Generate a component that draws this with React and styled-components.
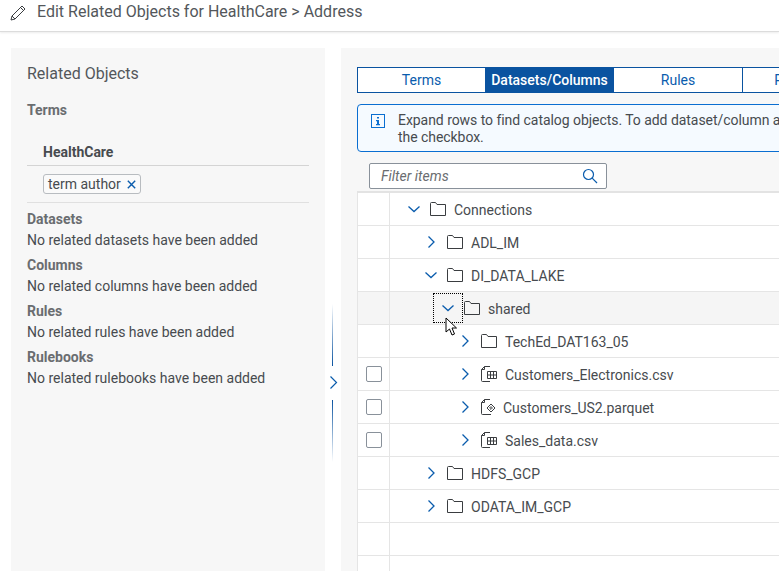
import React from "react";
import styled, { createGlobalStyle } from "styled-components";

const Global = createGlobalStyle`
  html, body { margin: 0; padding: 0; background: #fff; }
  * { box-sizing: border-box; }
  body { font-family: Roboto, "Noto Sans", Arial, sans-serif; color: #474b4f; }
`;

const Page = styled.div`
  width: 779px; height: 571px; overflow: hidden; display: flex; flex-direction: column; background: #fff; position: relative;
`;
const Header = styled.header`
  height: 32px; flex: none; display: flex; align-items: flex-start; padding: 3px 0 0 10px; gap: 11px;
  border-bottom: 1px solid #dcdcdc; box-shadow: 0 1px 2px rgba(0,0,0,.08);
`;
const Title = styled.h1`
  margin: 0; font-size: 16px; font-weight: 400; line-height: 18px; color: #53575b; white-space: nowrap;
`;
const Body = styled.div`
  flex: 1; display: flex; padding: 16px 0 0 11px; min-height: 0;
`;
const LeftPanel = styled.aside`
  width: 314px; flex: none; background: #f7f7f7; padding: 16px 16px 0;
`;
const PanelTitle = styled.h2`
  margin: 0 0 17px; font-size: 16px; font-weight: 400; line-height: 20px; color: #53575b;
`;
const SectionTitle = styled.h3`
  margin: 0; font-size: 14px; font-weight: 700; line-height: 18px; color: #6a6d70;
`;
const TermHead = styled.div`
  margin-top: 24px; height: 23px; padding-left: 16px; font-size: 14px; font-weight: 700; line-height: 18px; color: #474b4f; border-bottom: 1px solid #d4d4d4;
`;
const TermCell = styled.div`
  height: 37px; padding: 8px 0 0 16px; border-bottom: 1px solid #e0e0e0; margin-bottom: 7px;
`;
const Token = styled.span`
  display: inline-flex; align-items: center; height: 20px; padding: 0 4px; gap: 6px; border: 1px solid #b8bcc0; border-radius: 3px; background: #fafafa; font-size: 14px; color: #474b4f;
`;
const Empty = styled.p`
  margin: 2px 0 5px; font-size: 14px; line-height: 21px; color: #474b4f; height: 21px;
`;
const Sash = styled.div`
  width: 16px; flex: none; position: relative;
`;
const SashLine = styled.i`
  position: absolute; left: 7px; width: 1px; display: block;
  top: ${p => p.$top}px; height: ${p => p.$h}px;
  background: linear-gradient(${p => p.$dir}, rgba(10,83,160,0), #0a53a0);
`;
const RightPanel = styled.main`
  flex: 1; background: #f7f7f7; padding: 19px 0 0 16px; min-width: 0; overflow: hidden;
`;
const Tabs = styled.div`
  display: flex; width: 520px; height: 26px; border: 1px solid #0a53a0; background: #fff;
`;
const Tab = styled.div`
  width: ${p => p.$w}px; flex: none; display: flex; align-items: center; justify-content: center; font-size: 14px;
  color: ${p => p.$active ? "#fff" : "#0a5cad"}; background: ${p => p.$active ? "#0a53a0" : "transparent"};
  border-right: ${p => p.$sep ? "1px solid #0a53a0" : "none"};
  font-weight: ${p => p.$active ? 500 : 400};
`;
const Strip = styled.div`
  margin-top: 11px; width: 500px; height: 48px; border: 1px solid #0a6ed1; border-radius: 4px; background: #f5faff; display: flex; padding: 7px 0 0 13px; gap: 13px;
`;
const StripText = styled.div`
  font-size: 14px; line-height: 17px; color: #474b4f; white-space: nowrap; letter-spacing: -0.05px;
`;
const FilterBar = styled.div`
  margin: 11px 0 2px 12px; width: 238px; height: 26px; border: 1px solid #89919a; border-radius: 2px; background: #fff; display: flex; align-items: center; justify-content: space-between; padding: 0 8px 0 11px; font-size: 14px; font-style: italic; color: #6a6d70;
`;
const Table = styled.div`
  border-top: 2px solid #e3e3e3; background: #fff; width: 500px; height: 400px;
`;
const Row = styled.div`
  height: 33px; display: flex; border-bottom: 1px solid #e5e5e5; background: ${p => p.$hover ? "#f5f5f5" : "#fff"};
`;
const SelCell = styled.div`
  width: 33px; flex: none; border-right: 1px solid #e5e5e5; border-left: 1px solid #e5e5e5; display: flex; align-items: center; justify-content: center;
`;
const Check = styled.span`
  width: 16px; height: 16px; border: 1px solid #89919a; border-radius: 2px; background: #fff; display: block;
`;
const TreeCell = styled.div`
  flex: 1; display: flex; align-items: center; position: relative; padding-left: ${p => 17 * p.$level + 17}px; font-size: 14px; color: #474b4f;
`;
const Toggle = styled.span`
  width: 14px; flex: none; display: flex; justify-content: center; position: relative; margin-right: 9px;
`;
const Focus = styled.span`
  position: absolute; left: -8px; top: -8px; width: 30px; height: 30px; border: 1px dotted #000;
`;
const IconBox = styled.span`
  width: 16px; height: 16px; flex: none; display: block;
`;
const Label = styled.span`
  margin-left: ${p => p.$gap || 8}px; white-space: nowrap; line-height: 18px; position: relative; top: 1px;
`;
const Cursor = styled.svg`
  position: absolute; left: 445px; top: 317px;
`;

const Chevron = ({ open }) => (
  <svg width="14" height="14" viewBox="0 0 14 14" fill="none" stroke="#0a5cad" strokeWidth="1.3">
    {open ? <path d="M1.5 4.5 7 9.5l5.5-5" /> : <path d="M4.5 1.5 10 7l-5.5 5.5" />}
  </svg>
);
const Folder = () => (
  <svg width="16" height="16" viewBox="0 0 16 16" fill="none" stroke="#3a3d40" strokeWidth="1"><path d="M.5 14.5v-12a1 1 0 0 1 1-1h4l1.5 2h8.5v11z" /></svg>
);
const TableFile = () => (
  <svg width="16" height="16" viewBox="0 0 16 16" fill="none" stroke="#3a3d40" strokeWidth="1">
    <path d="M9 .5H3.5L.5 3.5v11a1 1 0 0 0 1 1H9" />
    <path d="M3.5.5v3h-3" />
    <path d="M6.5 5.5h9v7h-9zM6.5 9h9M9.5 5.5v7M12.5 5.5v7" />
  </svg>
);
const DiamondFile = () => (
  <svg width="16" height="16" viewBox="0 0 16 16" fill="none" stroke="#3a3d40" strokeWidth="1">
    <path d="M9 .5H3.5L.5 3.5v11a1 1 0 0 0 1 1H10" />
    <path d="M3.5.5v3h-3" />
    <path d="M10 5 14 9l-4 4-4-4zM10 7.6 11.4 9 10 10.4 8.6 9z" />
  </svg>
);

const rows = [
  { level: 2, open: true, icon: "folder", text: "Connections" },
  { level: 3, icon: "folder", text: "ADL_IM" },
  { level: 3, open: true, icon: "folder", text: "DI_DATA_LAKE" },
  { level: 4, open: true, icon: "folder", text: "shared", hover: true, focus: true },
  { level: 5, icon: "folder", text: "TechEd_DAT163_05" },
  { level: 5, icon: "table", text: "Customers_Electronics.csv", check: true },
  { level: 5, icon: "diamond", text: "Customers_US2.parquet", check: true, gap: 6 },
  { level: 5, icon: "table", text: "Sales_data.csv", check: true },
  { level: 3, icon: "folder", text: "HDFS_GCP" },
  { level: 3, icon: "folder", text: "ODATA_IM_GCP" },
  {},
  {},
];

const Icons = { folder: Folder, table: TableFile, diamond: DiamondFile };

export default function App() {
  return (
    <Page>
      <Global />
      <Header>
        <svg width="16" height="16" viewBox="0 0 16 16" fill="none" stroke="#3a3d40" strokeWidth="1" style={{ marginTop: 2 }}>
          <path d="M1 15l1-4L12 1l3 3L5 14zM2 11l3 3M10.5 2.5l3 3" />
        </svg>
        <Title>Edit Related Objects for HealthCare &gt; Address</Title>
      </Header>
      <Body>
        <LeftPanel>
          <PanelTitle>Related Objects</PanelTitle>
          <SectionTitle>Terms</SectionTitle>
          <TermHead>HealthCare</TermHead>
          <TermCell>
            <Token>
              term author
              <svg width="9" height="9" viewBox="0 0 9 9" stroke="#0a5cad" strokeWidth="1.4"><path d="M.8.8l7.4 7.4M8.2.8.8 8.2" /></svg>
            </Token>
          </TermCell>
          <SectionTitle>Datasets</SectionTitle>
          <Empty>No related datasets have been added</Empty>
          <SectionTitle>Columns</SectionTitle>
          <Empty>No related columns have been added</Empty>
          <SectionTitle>Rules</SectionTitle>
          <Empty>No related rules have been added</Empty>
          <SectionTitle>Rulebooks</SectionTitle>
          <Empty>No related rulebooks have been added</Empty>
        </LeftPanel>
        <Sash>
          <SashLine $top={256} $h={62} $dir="to bottom" />
          <SashLine $top={352} $h={62} $dir="to top" />
          <svg width="9" height="14" viewBox="0 0 9 14" fill="none" stroke="#0a5cad" strokeWidth="1.2" style={{ position: "absolute", left: 4, top: 328 }}>
            <path d="M1.5 .5 7.5 6.5l-6 6" />
          </svg>
        </Sash>
        <RightPanel>
          <Tabs>
            <Tab $w={127}>Terms</Tab>
            <Tab $w={129} $active>Datasets/Columns</Tab>
            <Tab $w={129} $sep>Rules</Tab>
            <Tab $w={128}>Rulebooks</Tab>
          </Tabs>
          <Strip>
            <svg width="14" height="14" viewBox="0 0 14 14" style={{ flex: "none", marginTop: 2 }}>
              <rect x=".5" y=".5" width="13" height="13" fill="none" stroke="#0a6ed1" />
              <path d="M6 3h2v1.6H6zM5 6h3v4h1v1.2H5V10h1V7.2H5z" fill="#0a6ed1" />
            </svg>
            <StripText>Expand rows to find catalog objects. To add dataset/column as<br />the checkbox.</StripText>
          </Strip>
          <FilterBar>
            Filter items
            <svg width="16" height="16" viewBox="0 0 16 16" fill="none" stroke="#0a5cad" strokeWidth="1.2">
              <circle cx="6.5" cy="6.5" r="5" /><path d="M10.2 10.2 15 15" />
            </svg>
          </FilterBar>
          <Table>
            {rows.map((r, i) => {
              const Icon = Icons[r.icon];
              return (
                <Row key={i} $hover={r.hover}>
                  <SelCell>{r.check && <Check />}</SelCell>
                  {r.text && (
                    <TreeCell $level={r.level - 2}>
                      <Toggle>
                        <Chevron open={r.open} />
                        {r.focus && <Focus />}
                      </Toggle>
                      <IconBox><Icon /></IconBox>
                      <Label $gap={r.gap}>{r.text}</Label>
                    </TreeCell>
                  )}
                </Row>
              );
            })}
          </Table>
        </RightPanel>
      </Body>
      <Cursor width="14" height="20" viewBox="0 0 14 20">
        <path d="M1 1v14l3.5-3 2.5 6 2.5-1-2.5-6h4.5z" fill="#fff" stroke="#000" strokeWidth="1" />
      </Cursor>
    </Page>
  );
}
